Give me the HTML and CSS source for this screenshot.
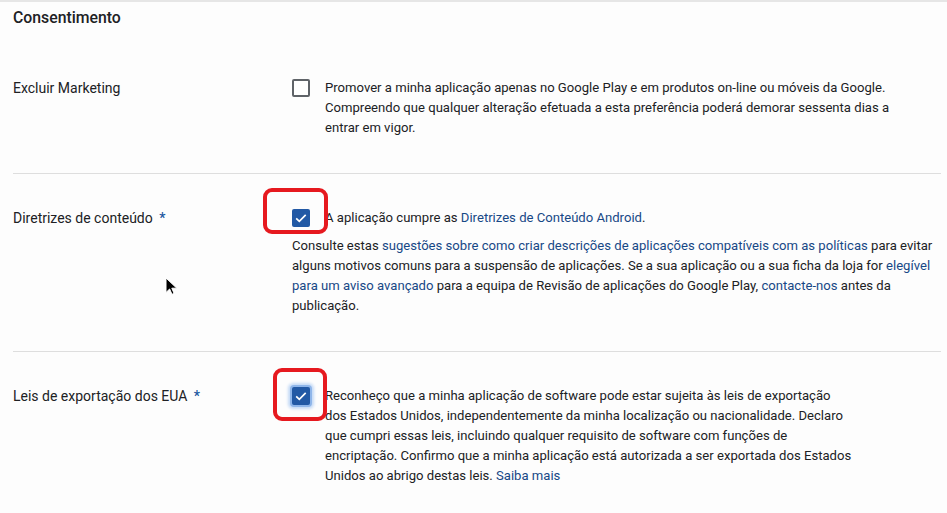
FILE: index.html
```html
<!DOCTYPE html>
<html lang="pt">
<head>
<meta charset="utf-8">
<title>Consentimento</title>
<link rel="stylesheet" href="styles.css">
</head>
<body>
<div class="page">
  <h2 class="title">Consentimento</h2>

  <div class="row row-first">
    <div class="label">Excluir Marketing</div>
    <div class="content">
      <div class="check-line narrow-1">
        <span class="box"></span>
        <span class="check-text">Promover a minha aplicação apenas no Google Play e em produtos on-line ou móveis da Google. Compreendo que qualquer alteração efetuada a esta preferência poderá demorar sessenta dias a entrar em vigor.</span>
      </div>
    </div>
  </div>

  <div class="row">
    <div class="label">Diretrizes de conteúdo <span class="req">*</span></div>
    <div class="content">
      <div class="check-line">
        <span class="box checked">
          <svg viewBox="0 0 18 18" width="18" height="18"><path d="M4.2 9.3l3.1 3 6.4-6.4" fill="none" stroke="#fff" stroke-width="1.7"/></svg>
          <span class="annot annot-a"></span>
        </span>
        <span class="check-text">A aplicação cumpre as <a href="#">Diretrizes de Conteúdo Android</a>.</span>
      </div>
      <p class="para">Consulte estas <a href="#">sugestões sobre como criar descrições de aplicações compatíveis com as políticas</a> para evitar alguns motivos comuns para a suspensão de aplicações. Se a sua aplicação ou a sua ficha da loja for <a href="#">elegível para um aviso avançado</a> para a equipa de Revisão de aplicações do Google Play, <a href="#">contacte-nos</a> antes da publicação.</p>
    </div>
    <svg class="cursor" viewBox="0 0 12 18" width="12" height="18"><path d="M1 1v14.5l3.6-3.5 2.4 5.3 2.1-0.9-2.3-5.2h5z" fill="#000" stroke="#fff" stroke-width="1"/></svg>
  </div>

  <div class="row row-last">
    <div class="label">Leis de exportação dos EUA <span class="req">*</span></div>
    <div class="content">
      <div class="check-line narrow-3">
        <span class="box checked focused">
          <svg viewBox="0 0 18 18" width="18" height="18"><path d="M4.2 9.3l3.1 3 6.4-6.4" fill="none" stroke="#fff" stroke-width="1.7"/></svg>
          <span class="annot annot-b"></span>
        </span>
        <span class="check-text">Reconheço que a minha aplicação de software pode estar sujeita às leis de exportação dos Estados Unidos, independentemente da minha localização ou nacionalidade. Declaro que cumpri essas leis, incluindo qualquer requisito de software com funções de encriptação. Confirmo que a minha aplicação está autorizada a ser exportada dos Estados Unidos ao abrigo destas leis. <a href="#">Saiba mais</a></span>
      </div>
    </div>
  </div>
</div>
</body>
</html>
```

FILE: styles.css
```css
html, body {
  margin: 0;
  padding: 0;
  background: #fdfdfd;
}
body {
  font-family: Roboto, "Noto Sans", Arial, sans-serif;
  color: #202124;
  font-size: 14px;
  line-height: 20px;
  border-top: 2px solid #e6e6e6;
  height: 511px;
  overflow: hidden;
}
.page {
  padding: 0 6px 0 13px;
}
.title {
  margin: 6px 0 0 0;
  font-size: 15.8px;
  font-weight: 500;
  line-height: 20px;
  color: #202124;
}
.row {
  position: relative;
  display: grid;
  grid-template-columns: 279px 1fr;
  padding: 34px 0 35px 0;
  border-top: 1px solid #dedede;
}
.row-first {
  border-top: none;
  padding-top: 50px;
}
.row-last {
  padding-bottom: 20px;
}
.label {
  font-size: 14px;
  color: #202124;
}
.req {
  color: #1a57a0;
  font-weight: 500;
  margin-left: 3px;
}
.content {
  min-width: 0;
  font-size: 13.1px;
}
.check-line {
  display: flex;
  gap: 15px;
  align-items: flex-start;
}
.narrow-1 {
  max-width: 614px;
}
.narrow-3 {
  max-width: 561px;
}
.box {
  position: relative;
  flex: none;
  width: 18px;
  height: 18px;
  margin-top: 1px;
  box-sizing: border-box;
  border: 2px solid #5f6368;
  border-radius: 2px;
  background: #fff;
}
.box.checked {
  border: none;
  background: #2259a5;
}
.box.checked svg {
  display: block;
}
.box.focused {
  box-shadow: 0 0 0 2px #8fb6ea, 0 0 3px 4px #c4daf6;
}
.check-text {
  flex: 1;
}
a {
  color: #174886;
  text-decoration: none;
}
.para {
  margin: 8px 0 0 0;
  max-width: 650px;
}
.annot {
  position: absolute;
  border: 4px solid #e6191f;
  border-radius: 9px;
}
.annot-a {
  left: -29px;
  top: -21px;
  width: 57px;
  height: 38px;
}
.annot-b {
  left: -19px;
  top: -19px;
  width: 46px;
  height: 45px;
}
.cursor {
  position: absolute;
  left: 152px;
  top: 103px;
}
```
